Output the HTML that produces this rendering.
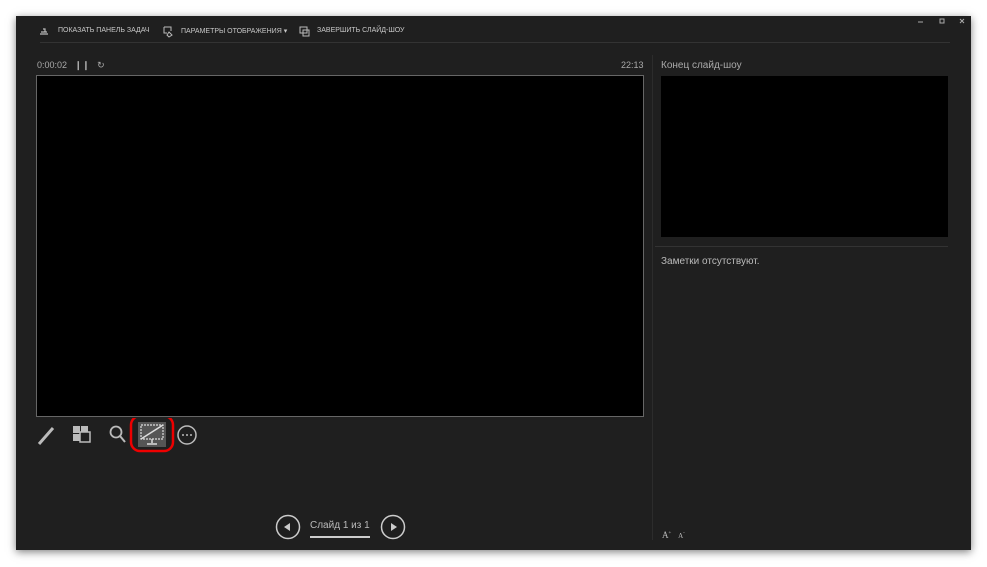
<!DOCTYPE html><html><head><meta charset="utf-8"><style>
body{margin:0;width:987px;height:567px;background:#fff;position:relative;overflow:hidden;font-family:"Liberation Sans",sans-serif;}
.w{position:absolute;left:16px;top:16px;width:955px;height:534px;background:#1f1f1f;box-shadow:0 2px 8px rgba(0,0,0,.5);}
.t{position:absolute;color:#c8c8c8;font-size:7px;white-space:nowrap;}
.a{position:absolute}
</style></head><body>
<div class="w"></div>
<svg class="a" style="left:38px;top:24px" width="300" height="14">
<path d="M2 10 H10 M3 8 H9 M5 5 H7 V8" stroke="#bbb" stroke-width="1.2" fill="none"/>
<path d="M126 3 H133 V7 M126 3 V9 H129 M131 8 L134 11 L131 13 L129 11Z" stroke="#bbb" stroke-width="1" fill="none"/>
<rect x="262" y="3" width="7" height="6" fill="none" stroke="#bbb"/><rect x="265" y="6" width="6" height="6" fill="none" stroke="#bbb"/>
</svg>
<div class="t" style="left:58px;top:27px">ПОКАЗАТЬ ПАНЕЛЬ ЗАДАЧ</div>
<div class="t" style="left:181px;top:27px">ПАРАМЕТРЫ ОТОБРАЖЕНИЯ ▾</div>
<div class="t" style="left:317px;top:27px">ЗАВЕРШИТЬ СЛАЙД-ШОУ</div>
<svg class="a" style="left:915px;top:15px" width="55" height="12">
<path d="M3 7 H8" stroke="#aaa"/><rect x="25" y="4" width="4" height="4" fill="none" stroke="#aaa"/><path d="M45 4 L49 8 M49 4 L45 8" stroke="#aaa"/>
</svg>
<div class="a" style="left:40px;top:42px;width:910px;height:1px;background:#333"></div>
<div class="t" style="left:37px;top:60px;font-size:9px;color:#aaa">0:00:02 &nbsp;&nbsp;❙❙ &nbsp;&nbsp;↻</div>
<div class="t" style="left:621px;top:60px;font-size:9px;color:#aaa">22:13</div>
<div class="a" style="left:36px;top:75px;width:606px;height:340px;background:#000;border:1px solid #666"></div>
<div class="a" style="left:652px;top:55px;width:1px;height:485px;background:#2c2c2c"></div>
<div class="t" style="left:661px;top:60px;font-size:10px;color:#aaa">Конец слайд-шоу</div>
<div class="a" style="left:661px;top:76px;width:287px;height:161px;background:#000"></div>
<div class="a" style="left:655px;top:246px;width:293px;height:1px;background:#333"></div>
<div class="t" style="left:661px;top:256px;font-size:10px;color:#bbb">Заметки отсутствуют.</div>
<svg class="a" style="left:30px;top:418px" width="180" height="36">
<path d="M9 26 L23 10" stroke="#bbb" stroke-width="3"/>
<rect x="43" y="8" width="7" height="7" fill="#bbb"/><rect x="43" y="16" width="7" height="7" fill="#bbb"/><rect x="51" y="8" width="7" height="7" fill="#bbb"/><rect x="50" y="14" width="10" height="10" fill="#1f1f1f" stroke="#bbb" stroke-width="1.5"/>
<circle cx="86" cy="14" r="5.5" fill="none" stroke="#bbb" stroke-width="1.8"/><path d="M90 18 L95 24" stroke="#bbb" stroke-width="2"/>
<rect x="101" y="-2" width="42" height="35" rx="9" fill="none" stroke="#e00" stroke-width="2.5"/>
<rect x="108" y="4" width="28" height="25" fill="#555"/>
<rect x="111" y="7" width="22" height="14" fill="none" stroke="#ddd" stroke-width="1.2" stroke-dasharray="2 1"/><path d="M111 21 L133 7" stroke="#ddd" stroke-width="1.5"/><path d="M122 21 V25 M117 26 H127" stroke="#ddd" stroke-width="1.5"/>
<circle cx="157" cy="17" r="9" fill="none" stroke="#bbb" stroke-width="1.5"/><circle cx="153" cy="17" r="1" fill="#bbb"/><circle cx="157" cy="17" r="1" fill="#bbb"/><circle cx="161" cy="17" r="1" fill="#bbb"/>
</svg>
<svg class="a" style="left:274px;top:513px" width="135" height="28">
<circle cx="14" cy="14" r="11.5" fill="none" stroke="#ccc" stroke-width="1.5"/><path d="M10 14 L16 10 V18Z" fill="#ccc"/>
<circle cx="119" cy="14" r="11.5" fill="none" stroke="#ccc" stroke-width="1.5"/><path d="M123 14 L117 10 V18Z" fill="#ccc"/>
<rect x="36" y="23" width="60" height="2" fill="#ccc"/>
</svg>
<div class="t" style="left:310px;top:520px;font-size:10px;color:#bbb">Слайд 1 из 1</div>
<div class="t" style="left:662px;top:530px;font-size:9px;color:#bbb;font-family:'Liberation Serif',serif">A<sup style="font-size:5px">+</sup>&nbsp;&nbsp;&nbsp;<span style="font-size:7px">A</span><sup style="font-size:5px">-</sup></div>
</body></html>
